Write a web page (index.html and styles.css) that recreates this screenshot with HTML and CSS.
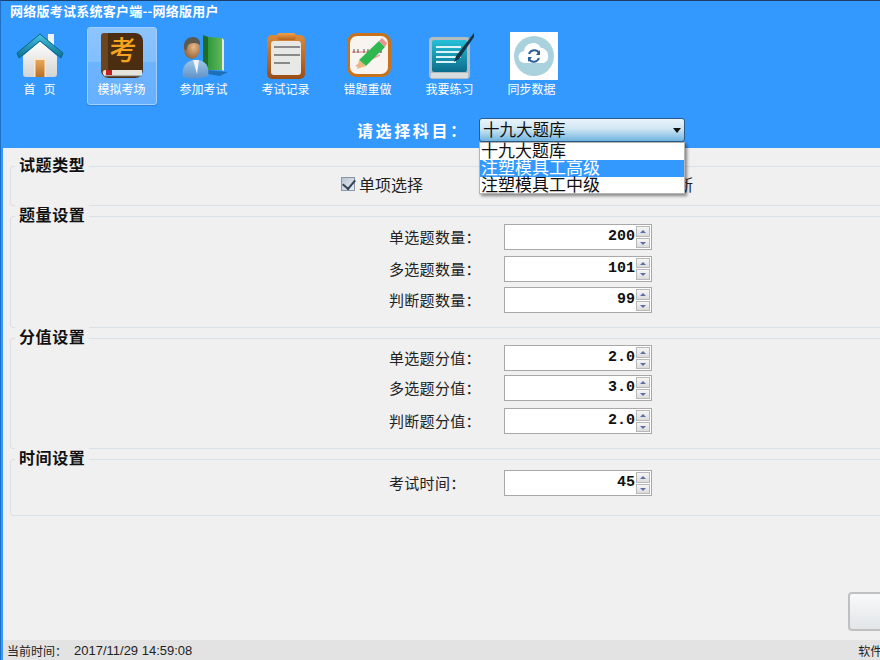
FILE: index.html
```html
<!DOCTYPE html>
<html lang="zh">
<head>
<meta charset="utf-8">
<title>网络版考试系统客户端</title>
<link rel="stylesheet" href="styles.css">
</head>
<body>
<div class="app">
  <header class="head">
    <div class="title">网络版考试系统客户端--网络版用户</div>
    <nav class="tools">
      <a class="tool">
        <svg class="ico" viewBox="0 0 48 48">
          <defs>
            <linearGradient id="roof" x1="0" y1="0" x2="0" y2="1"><stop offset="0" stop-color="#45c4e4"/><stop offset="1" stop-color="#0c6f8e"/></linearGradient>
            <linearGradient id="wall" x1="0" y1="0" x2="0" y2="1"><stop offset="0" stop-color="#ffffff"/><stop offset="1" stop-color="#d4d4d4"/></linearGradient>
            <linearGradient id="door" x1="0" y1="0" x2="0" y2="1"><stop offset="0" stop-color="#e8a858"/><stop offset="1" stop-color="#b86f28"/></linearGradient>
          </defs>
          <rect x="32" y="2" width="6" height="14" fill="#f2f2f2"/>
          <path d="M7 24 24 9 41 24V42a3 3 0 0 1-3 3H10a3 3 0 0 1-3-3Z" fill="url(#wall)"/>
          <path d="M1 21 24 2 47 21 45 26 24 9 3 26Z" fill="url(#roof)" stroke="#0b6483" stroke-width="1" stroke-linejoin="round"/>
          <rect x="18" y="26" width="12" height="19" fill="#f7e8cf"/>
          <rect x="19.500" y="28" width="9" height="17" fill="url(#door)"/>
        </svg>
        <span class="tool-label">首&nbsp;&nbsp;&nbsp;页</span>
      </a>
      <a class="tool tool-on">
        <svg class="ico" viewBox="0 0 48 48">
          <rect x="3" y="1" width="42" height="45" rx="8" fill="#4b2e12"/>
          <rect x="3" y="1" width="7" height="40" rx="3" fill="#6a4520"/>
          <path d="M7 38H44V44H9a3 3 0 0 1-2-6Z" fill="#e6e2dc"/>
          <rect x="8" y="38" width="6" height="5" fill="#c02020"/>
          <path d="M7 44H44" stroke="#7a7a7a" stroke-width="1"/>
          <text class="kao" x="25" y="28" text-anchor="middle">考</text>
        </svg>
        <span class="tool-label">模拟考场</span>
      </a>
      <a class="tool">
        <svg class="ico" viewBox="0 0 48 48">
          <defs>
            <linearGradient id="bk" x1="0" y1="0" x2="1" y2="0"><stop offset="0" stop-color="#2f9a3a"/><stop offset="1" stop-color="#5fb85a"/></linearGradient>
            <linearGradient id="coat" x1="0" y1="0" x2="0" y2="1"><stop offset="0" stop-color="#9fc6e8"/><stop offset="1" stop-color="#5f93c8"/></linearGradient>
            <radialGradient id="face" cx=".6" cy=".4" r=".7"><stop offset="0" stop-color="#e8b98a"/><stop offset="1" stop-color="#8a5a30"/></radialGradient>
          </defs>
          <path d="M26 38 48 40 40 44 28 42Z" fill="#1f6fb8"/>
          <path d="M23 3 28 5V38L23 35Z" fill="#1e6b2a"/>
          <path d="M28 5 42 6V38L28 38Z" fill="url(#bk)"/>
          <path d="M42 6 44 8V39L42 38Z" fill="#e8e8d8"/>
          <path d="M3 45C1 34 7 28 16 28S30 34 28 44C22 47 9 47 3 45Z" fill="url(#coat)"/>
          <path d="M13 28H19L17 42Z" fill="#f0f4f8"/>
          <ellipse cx="12" cy="17" rx="8" ry="10" fill="url(#face)"/>
          <path d="M4 16C3 8 9 5 13 5S21 8 20 13C16 10 10 11 8 13L6 19Z" fill="#5a5a50"/>
        </svg>
        <span class="tool-label">参加考试</span>
      </a>
      <a class="tool">
        <svg class="ico" viewBox="0 0 48 48">
          <defs>
            <linearGradient id="cl" x1="0" y1="0" x2="0" y2="1"><stop offset="0" stop-color="#eda24a"/><stop offset="1" stop-color="#b8641c"/></linearGradient>
            <linearGradient id="clb" x1="0" y1="0" x2="0" y2="1"><stop offset="0" stop-color="#d98a3c"/><stop offset="1" stop-color="#9a4e18"/></linearGradient>
          </defs>
          <rect x="5" y="3" width="38" height="44" rx="5" fill="url(#clb)"/>
          <rect x="9" y="9" width="30" height="34" rx="3" fill="#e8e8e6"/>
          <rect x="15" y="1" width="19" height="7" rx="3" fill="url(#cl)"/>
          <path d="M12 15H38M12 23H38M12 31H28" stroke="#8a8a8a" stroke-width="1.800"/>
        </svg>
        <span class="tool-label">考试记录</span>
      </a>
      <a class="tool">
        <svg class="ico" viewBox="0 0 48 48">
          <rect x="3" y="1" width="44" height="44" rx="9" fill="#c8731c"/>
          <rect x="6" y="4" width="38" height="38" rx="7" fill="#f8f4f0"/>
          <path d="M8 20H38M12 34 36 23" stroke="#f0a0a0" stroke-width="1.500"/>
          <path d="M10 17V21M14 17V21M20 17V21M24 17V21M37 17V21" stroke="#555" stroke-width="1"/>
          <path d="M35 9 41 15 22 34 15 28Z" fill="#2fb84f"/>
          <path d="M35 9 38 6 43 11 41 15Z" fill="#f09090"/>
          <path d="M15 28 22 34 13 37Z" fill="#e8b880"/>
        </svg>
        <span class="tool-label">错题重做</span>
      </a>
      <a class="tool">
        <svg class="ico" viewBox="0 0 48 48">
          <defs><linearGradient id="scr" x1="0" y1="0" x2="0" y2="1"><stop offset="0" stop-color="#25c0d8"/><stop offset="1" stop-color="#0c6c8c"/></linearGradient></defs>
          <rect x="3" y="5" width="41" height="42" rx="4" fill="#b4bcc0"/>
          <rect x="6" y="8" width="35" height="32" rx="2" fill="url(#scr)"/>
          <rect x="5" y="41" width="37" height="5" fill="#d8dcde"/>
          <path d="M10 15H35M10 20H35M10 25H35M10 30H30" stroke="#d8f4f8" stroke-width="2.200"/>
          <path d="M48 1 30 24 28 30 33 27 48 5Z" fill="#14364a"/>
        </svg>
        <span class="tool-label">我要练习</span>
      </a>
      <a class="tool tool-sync">
        <svg class="ico" viewBox="0 0 48 48">
          <rect width="48" height="48" fill="#fff"/>
          <circle cx="24" cy="24" r="20" fill="#a9d2de"/>
          <path d="M15 31a6 6 0 0 1-1-12 9 9 0 0 1 17-3 8 8 0 0 1 3 15Z" fill="#fff"/>
          <path d="M19 22a5.500 5.500 0 0 1 10-1M29 26a5.500 5.500 0 0 1-10 1" fill="none" stroke="#2f5f9a" stroke-width="2"/>
          <path d="M30 18V23H26ZM18 30V25H22Z" fill="#2f5f9a"/>
        </svg>
        <span class="tool-label">同步数据</span>
      </a>
    </nav>
    <div class="subject">
      <span class="subject-label">请选择科目：</span>
      <div class="combo">
        <span>十九大题库</span>
        <i class="combo-arrow"></i>
        <ul class="combo-list">
          <li>十九大题库</li>
          <li class="combo-on">注塑模具工高级</li>
          <li>注塑模具工中级</li>
        </ul>
      </div>
    </div>
  </header>

  <main class="main">
    <fieldset class="group group-type">
      <legend>试题类型</legend>
      <div class="checks">
        <label class="check"><i class="box"></i>单项选择</label>
        <label class="check"><i class="box"></i>多项选择</label>
        <label class="check"><i class="box"></i>判断</label>
      </div>
    </fieldset>

    <fieldset class="group">
      <legend>题量设置</legend>
      <div class="rows">
        <div class="row"><span class="row-label">单选题数量：</span><div class="spin"><b>200</b><span class="btns"><i class="up"></i><i class="down"></i></span></div></div>
        <div class="row"><span class="row-label">多选题数量：</span><div class="spin"><b>101</b><span class="btns"><i class="up"></i><i class="down"></i></span></div></div>
        <div class="row"><span class="row-label">判断题数量：</span><div class="spin"><b>99</b><span class="btns"><i class="up"></i><i class="down"></i></span></div></div>
      </div>
    </fieldset>

    <fieldset class="group">
      <legend>分值设置</legend>
      <div class="rows rows-score">
        <div class="row"><span class="row-label">单选题分值：</span><div class="spin"><b>2.0</b><span class="btns"><i class="up"></i><i class="down"></i></span></div></div>
        <div class="row"><span class="row-label">多选题分值：</span><div class="spin"><b>3.0</b><span class="btns"><i class="up"></i><i class="down"></i></span></div></div>
        <div class="row"><span class="row-label">判断题分值：</span><div class="spin"><b>2.0</b><span class="btns"><i class="up"></i><i class="down"></i></span></div></div>
      </div>
    </fieldset>

    <fieldset class="group">
      <legend>时间设置</legend>
      <div class="rows rows-time">
        <div class="row"><span class="row-label">考试时间：</span><div class="spin"><b>45</b><span class="btns"><i class="up"></i><i class="down"></i></span></div></div>
      </div>
    </fieldset>

    <div class="actions"><button class="btn" type="button"></button></div>
  </main>

  <footer class="status">
    <span class="status-key">当前时间：</span>
    <span class="status-time">2017/11/29 14:59:08</span>
    <span class="status-ver">软件版本</span>
  </footer>
</div>
</body>
</html>
```

FILE: styles.css
```css
* { box-sizing: border-box; }
html, body { margin: 0; padding: 0; height: 100%; overflow: hidden; }
body {
  font-family: "Noto Sans CJK SC", "Liberation Sans", sans-serif;
  color: #111;
}
.app {
  width: 880px;
  height: 660px;
  display: flex;
  flex-direction: column;
  background: #3399ff;
  border-top: 1px solid #1d3f66;
  border-left: 1px solid #1c6fc2;
  overflow: hidden;
}
.head { height: 147px; flex: none; color: #fff; }
.title {
  height: 26px;
  padding: 1px 0 0 9px;
  font-size: 13px;
  line-height: 18px;
  font-weight: 700;
  letter-spacing: .25px;
  white-space: nowrap;
}
.tools { display: flex; gap: 12px; padding-left: 4px; height: 78px; }
.tool {
  width: 70px;
  height: 78px;
  display: flex;
  flex-direction: column;
  align-items: center;
  padding-top: 4px;
  border: 1px solid transparent;
  border-radius: 3px;
}
.tool-on {
  background: linear-gradient(#8cc4ff 0, #82bfff 44%, #6db4ff 45%, #66b0ff 100%);
  border-color: #a3d0ff;
  box-shadow: 0 1px 1px #2f80d8;
}
.ico { width: 48px; height: 48px; flex: none; overflow: visible; }
.tool-sync .ico { transform: translateX(2px); }
.tool-label { font-size: 12px; line-height: 18px; white-space: nowrap; margin-right: 1px; }
.kao { font-size: 27px; font-weight: 500; fill: #f5a41f; font-family: "Noto Sans CJK SC", sans-serif; }

.subject { display: flex; align-items: center; padding: 13px 0 0 356px; }
.subject-label { width: 122px; font-size: 16px; line-height: 24px; font-weight: 700; letter-spacing: 2.6px; white-space: nowrap; }
.combo {
  position: relative;
  width: 206px;
  height: 24px;
  padding: 0 0 2px 3px;
  display: flex;
  align-items: center;
  font-size: 16.500px;
  color: #111;
  background: linear-gradient(#eaf4fb, #cfe6f4 45%, #6fb3de 100%);
  border: 1px solid #2b5c88;
  border-radius: 3px;
}
.combo-arrow {
  position: absolute;
  right: 3px;
  top: 9px;
  border: 4px solid transparent;
  border-top: 5px solid #111;
  border-bottom: 0;
}
.combo-list {
  position: absolute;
  z-index: 5;
  left: -1px;
  top: 23px;
  width: 206px;
  height: 52px;
  margin: 0;
  padding: 0;
  list-style: none;
  background: #fff;
  border: 1px solid #b4b4b4;
  box-shadow: 2px 2px 3px rgba(0, 0, 0, .45);
}
.combo-list li { height: 17px; padding-left: 1px; font-size: 17px; line-height: 14px; white-space: nowrap; }
.combo-list .combo-on { background: #3399ff; color: #fff; }

.main {
  flex: 1;
  min-height: 0;
  margin-left: 2px;
  display: flex;
  flex-direction: column;
  padding: 6px 0 0 7px;
  background: #f0f0f0;
}
.group {
  width: 1000px;
  min-width: 1000px;
  margin: 0 0 -2px;
  padding: 0;
  border: 1px solid #d8e0e8;
  border-radius: 3px;
  flex: none;
}
.group legend {
  margin: 0 0 -12px 4px;
  padding: 0 4px 4px;
  font-size: 16px;
  line-height: 20px;
  font-weight: 700;
  letter-spacing: .6px;
  color: #111;
  background: #f0f0f0;
}
.group-type { height: 52px; }
.checks { display: flex; gap: 69px; padding: 8px 0 0 330px; font-size: 16px; line-height: 20px; }
.check { display: flex; align-items: center; gap: 4px; white-space: nowrap; color: #222; }
.box {
  width: 14px;
  height: 14px;
  background: linear-gradient(135deg, #b9c4d4, #e8edf4);
  border: 1px solid #8a96a8;
  position: relative;
}
.box::after {
  content: "";
  position: absolute;
  left: 3px;
  top: -1px;
  width: 6px;
  height: 10px;
  border: solid #33414f;
  border-width: 0 2px 2px 0;
  transform: rotate(40deg);
}
.rows { display: flex; flex-direction: column; gap: 5.500px; padding: 8px 0 14px 378px; }
.rows-score { padding: 7px 0 14px 378px; }
.rows-score .row:nth-child(2) { margin: -1.500px 0 1.500px; }
.rows-time { padding: 11px 0 19px 378px; }
.row { display: flex; align-items: center; height: 26px; }
.row-label { width: 115px; font-size: 15px; line-height: 26px; letter-spacing: .3px; white-space: nowrap; color: #222; }
.spin {
  width: 148px;
  height: 26px;
  display: flex;
  align-items: center;
  justify-content: flex-end;
  padding-right: 1px;
  background: #fff;
  border: 1px solid #a8a8a8;
}
.spin b { font-family: "Liberation Mono", monospace; font-size: 15px; line-height: 22px; margin-right: 1px; color: #111; }
.btns { width: 14px; height: 22px; display: flex; flex-direction: column; gap: 1px; }
.btns i {
  flex: 1;
  position: relative;
  background: linear-gradient(#f6f6f6, #dcdcdc);
  border: 1px solid #b8b8b8;
}
.btns i::after {
  content: "";
  position: absolute;
  left: 3px;
  top: 3px;
  border: 3px solid transparent;
}
.btns .up::after { border-top: 0; border-bottom: 3px solid #5f6ea8; }
.btns .down::after { border-bottom: 0; border-top: 3px solid #5f6ea8; }

.actions { margin-top: auto; padding: 0 0 9px 838px; flex: none; }
.btn {
  display: block;
  width: 100px;
  height: 39px;
  padding: 0;
  background: linear-gradient(#f8f9fa, #e2e6e8);
  border: 2px solid #c0c0c0;
  border-radius: 4px;
}
.status {
  height: 20px;
  flex: none;
  margin-left: 2px;
  display: flex;
  align-items: center;
  padding-left: 4px;
  background: #e3e3e3;
  font-size: 12px;
  white-space: nowrap;
  color: #222;
}
.status-key { width: 67px; flex: none; }
.status-time { font-family: "Liberation Sans", sans-serif; font-size: 13px; flex: none; }
.status-ver { margin-left: 666px; flex: none; }
```
